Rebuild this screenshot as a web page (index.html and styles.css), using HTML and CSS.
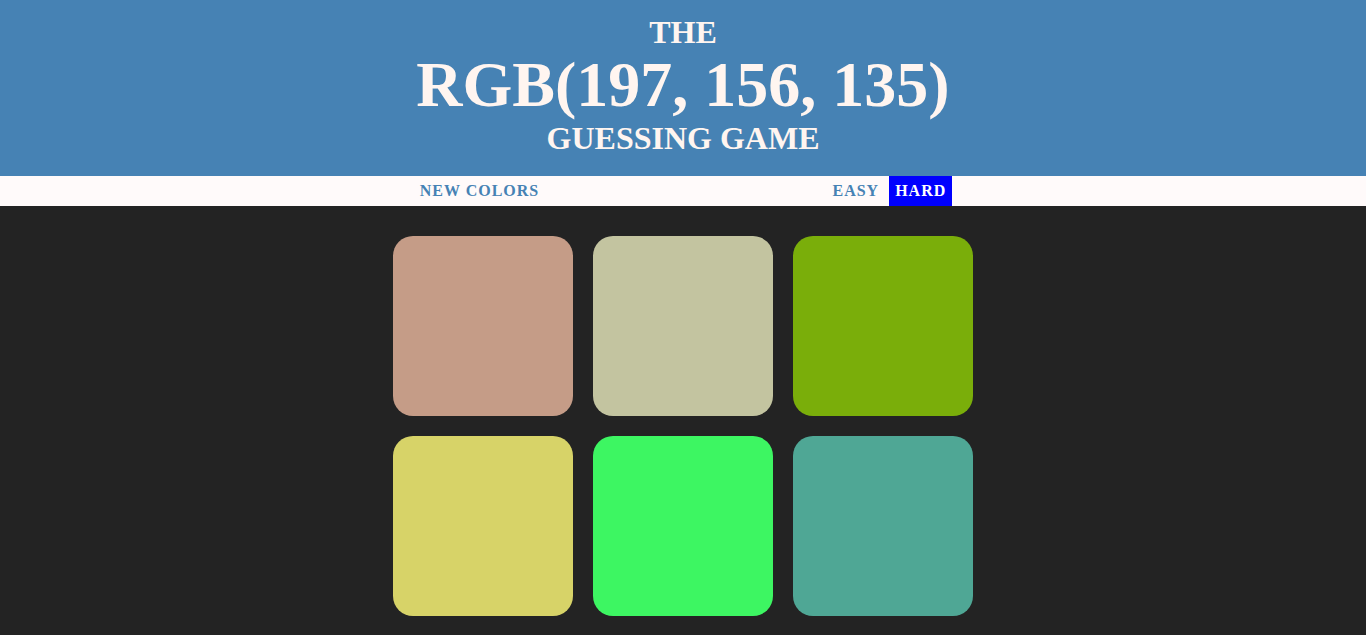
FILE: index.html
```html
<!DOCTYPE html>
<html>
<head>
<meta charset="utf-8">
<title>Color Game</title>
<link rel="stylesheet" href="styles.css">
</head>
<body>
<h1 class="title">The<br><span class="color-display">RGB(197, 156, 135)</span><br>Guessing Game</h1>
<div class="stripe">
  <button class="btn">New Colors</button>
  <span class="message"></span>
  <button class="btn">Easy</button>
  <button class="btn selected">Hard</button>
</div>
<div class="container">
  <div class="square" style="background: rgb(197, 156, 135);"></div>
  <div class="square" style="background: rgb(195, 196, 160);"></div>
  <div class="square" style="background: rgb(122, 174, 10);"></div>
  <div class="square" style="background: rgb(215, 211, 104);"></div>
  <div class="square" style="background: rgb(61, 246, 98);"></div>
  <div class="square" style="background: rgb(79, 167, 149);"></div>
</div>
</body>
</html>
```
FILE: styles.css
```css
body {
  margin: 0;
  background: #232323;
  font-family: "Liberation Serif", "Times New Roman", serif;
}
.title {
  margin: 0;
  padding: 15px 0 20px;
  background: steelblue;
  color: #fff5f0;
  text-align: center;
  text-transform: uppercase;
  font-size: 32px;
  font-weight: bold;
  line-height: 1.1;
}
.color-display {
  font-size: 64px;
}
.stripe {
  background: #fffafa;
  height: 30px;
  text-align: center;
  font-size: 16px;
}
.message {
  display: inline-block;
  width: 20%;
}
.btn {
  border: none;
  background: none;
  text-transform: uppercase;
  height: 100%;
  font-weight: 700;
  color: steelblue;
  letter-spacing: 1px;
  font-size: inherit;
  font-family: inherit;
  padding: 1px 6px;
  outline: none;
}
.btn.selected {
  background: blue;
  color: #fff;
}
.container {
  max-width: 600px;
  margin: 20px auto;
  display: flex;
  flex-wrap: wrap;
}
.square {
  width: 180px;
  height: 180px;
  margin: 10px;
  border-radius: 20px;
}
```
